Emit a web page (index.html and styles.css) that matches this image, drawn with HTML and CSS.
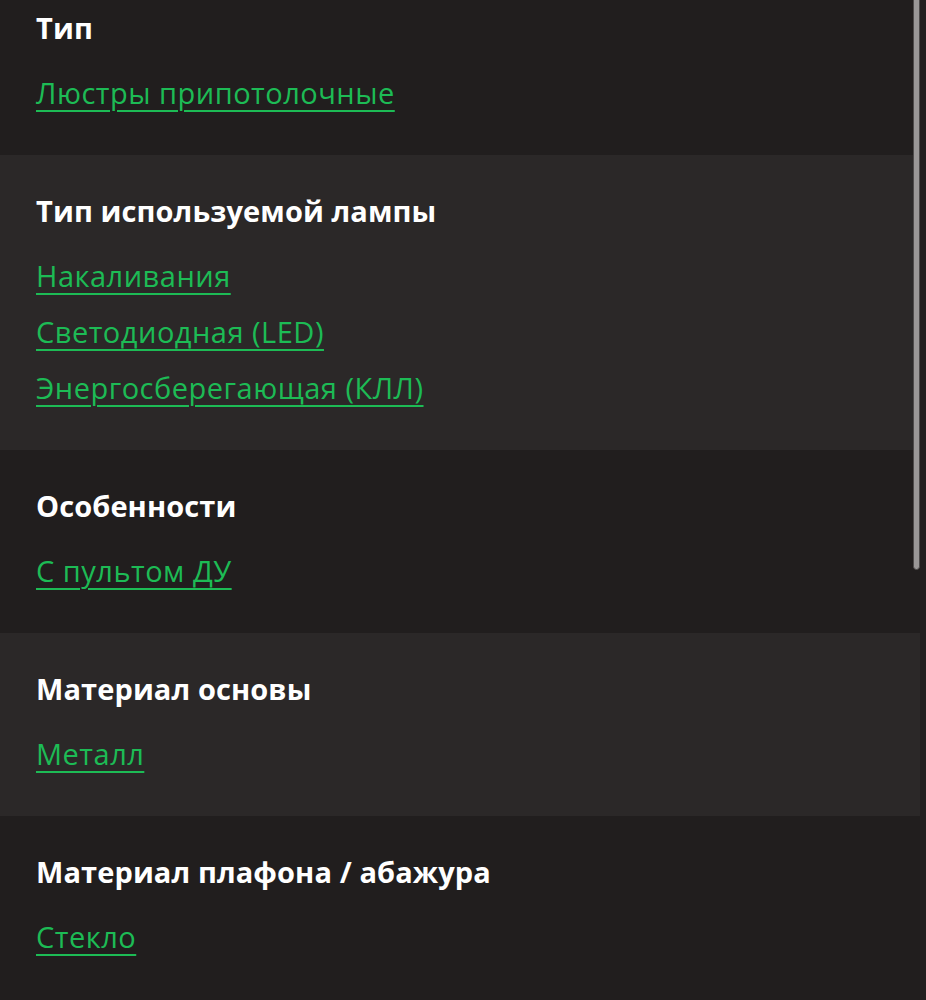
FILE: index.html
```html
<!DOCTYPE html>
<html lang="ru">

<head>
    <meta charset="UTF-8">
    <meta name="viewport" content="width=device-width, initial-scale=1.0">
    <title>Характеристики</title>
    <link rel="stylesheet" href="styles.css">
</head>

<body>
    <div class="specs">
        <!-- Тип -->
        <section class="spec spec-first">
            <h3 class="spec-title">Тип</h3>
            <ul class="spec-values">
                <li><a href="#">Люстры припотолочные</a></li>
            </ul>
        </section>

        <!-- Тип лампы -->
        <section class="spec spec-alt">
            <h3 class="spec-title">Тип используемой лампы</h3>
            <ul class="spec-values">
                <li><a href="#">Накаливания</a></li>
                <li><a href="#">Светодиодная (LED)</a></li>
                <li><a href="#">Энергосберегающая (КЛЛ)</a></li>
            </ul>
        </section>

        <section class="spec">
            <h3 class="spec-title">Особенности</h3>
            <ul class="spec-values">
                <li><a href="#">С пультом ДУ</a></li>
            </ul>
        </section>

        <section class="spec spec-alt">
            <h3 class="spec-title">Материал основы</h3>
            <ul class="spec-values">
                <li><a href="#">Металл</a></li>
            </ul>
        </section>

        <section class="spec">
            <h3 class="spec-title">Материал плафона / абажура</h3>
            <ul class="spec-values">
                <li><a href="#">Стекло</a></li>
            </ul>
        </section>
    </div>

    <div class="scrollbar"><div class="scrollbar-thumb"></div></div>
</body>

</html>
```

FILE: styles.css
```css
body {
    margin: 0;
    padding: 0;
    background-color: #211e1e;
    font-family: 'Open Sans', 'Liberation Sans', sans-serif;
    color: #fff;
    height: 1000px;
    overflow: hidden;
}

.specs {
    display: flex;
    flex-direction: column;
}

.spec {
    background-color: #211e1e;
    padding: 38px 36px 34px;
}

.spec-first {
    padding-top: 10px; /* page is scrolled a bit */
}

.spec-alt {
    background-color: #2b2828;
}

.spec-title {
    margin: 0;
    font-size: 29px;
    line-height: 36px;
    font-weight: 700;
    letter-spacing: 0.1px;
    color: #fff;
}

.spec-values {
    list-style: none;
    margin: 19px 0 0;
    padding: 0;
}

.spec-values li {
    line-height: 56px;
    font-size: 29px;
    letter-spacing: 0.5px;
}

.spec-values a {
    color: #1dbb55;
    text-decoration: underline;
    text-decoration-thickness: 2px;
    text-underline-offset: 6px;
}

/* fake scrollbar on top of the content */
.scrollbar {
    position: fixed;
    top: 0;
    right: 0;
    width: 13px;
    height: 1000px;
}

.scrollbar::after {
    content: '';
    position: absolute;
    top: 0;
    right: 0;
    width: 6px;
    height: 100%;
    background-color: #232020;
}

.scrollbar-thumb {
    position: absolute;
    top: -10px;
    left: 0;
    width: 5px;
    height: 578px;
    background-color: #9a9797;
    border: 1px solid #4e4b4b;
    border-radius: 4px;
}
```
